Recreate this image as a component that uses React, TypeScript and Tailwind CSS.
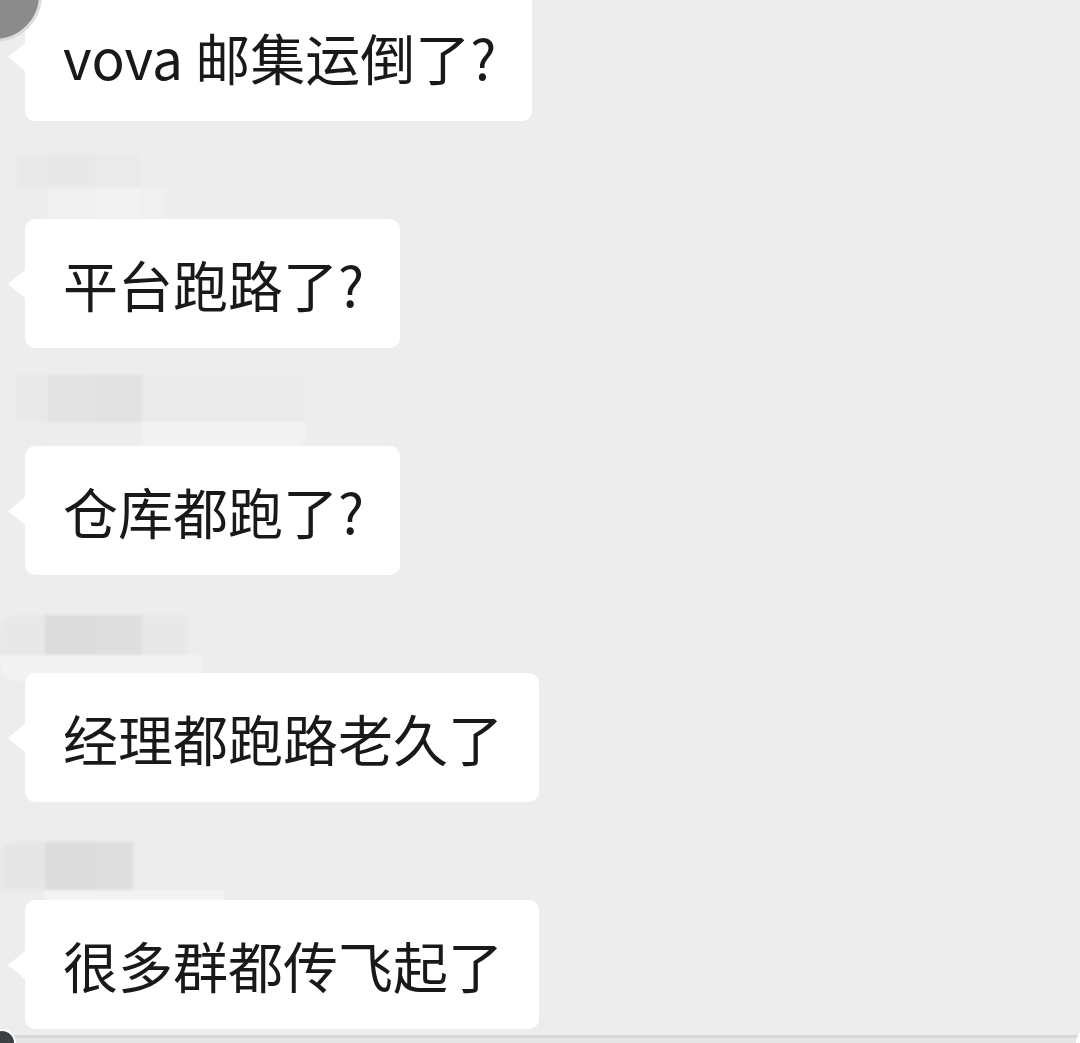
type Block = { w: number; c: string };
type Row = { h: number; x: number; blocks: Block[] };

interface Message {
  text: string;
  // blurred sender name, drawn as mosaic blocks
  name?: Row[];
  nameTop?: number;
}

const MESSAGES: Message[] = [
  { text: 'vova 邮集运倒了?' },
  {
    text: '平台跑路了?',
    nameTop: 34,
    name: [
      { h: 33, x: 17, blocks: [{ w: 31, c: '#e9e9e9' }, { w: 47, c: '#e8e8e8' }, { w: 45, c: '#eaeaea' }] },
      { h: 31, x: 48, blocks: [{ w: 47, c: '#f0f0f0' }, { w: 45, c: '#f2f2f2' }, { w: 27, c: '#f0f0f0' }] },
    ],
  },
  {
    text: '仓库都跑了?',
    nameTop: 27,
    name: [
      { h: 47, x: 16, blocks: [{ w: 32, c: '#e9e9e9' }, { w: 47, c: '#e3e3e3' }, { w: 47, c: '#e1e1e1' }, { w: 160, c: '#ebebeb' }] },
      { h: 24, x: 48, blocks: [{ w: 94, c: '#ededed' }, { w: 164, c: '#f3f3f3' }] },
    ],
  },
  {
    text: '经理都跑路老久了',
    nameTop: 40,
    name: [
      { h: 40, x: 0, blocks: [{ w: 45, c: '#e8e8e8' }, { w: 50, c: '#dcdcdc' }, { w: 47, c: '#dedede' }, { w: 45, c: '#e8e8e8' }] },
      { h: 26, x: 0, blocks: [{ w: 202, c: '#f3f3f3' }] },
    ],
  },
  {
    text: '很多群都传飞起了',
    nameTop: 40,
    name: [
      { h: 48, x: 0, blocks: [{ w: 45, c: '#e6e6e6' }, { w: 50, c: '#dcdcdc' }, { w: 38, c: '#dedede' }] },
      { h: 18, x: 45, blocks: [{ w: 180, c: '#f3f3f3' }] },
    ],
  },
];

function BlurredName({ rows, top }: { rows: Row[]; top: number }) {
  return (
    <div className="h-[98px]" style={{ paddingTop: top }}>
      <div className="flex w-[310px] flex-col overflow-hidden rounded-[16px] blur-[1.5px]">
        {rows.map((r, i) => (
          <div key={i} className="flex" style={{ height: r.h, paddingLeft: r.x }}>
            {r.blocks.map((b, j) => (
              <div key={j} className="h-full shrink-0" style={{ width: b.w, background: b.c }} />
            ))}
          </div>
        ))}
      </div>
    </div>
  );
}

function Bubble({ text }: { text: string }) {
  return (
    <div className="relative ml-[25px] flex h-[129px] w-fit items-center rounded-[10px] bg-white pl-[38px] pr-[36px]">
      <span className="absolute left-[-17px] top-1/2 -mt-[14px] h-0 w-0 border-y-[14px] border-r-[17px] border-y-transparent border-r-white" />
      <span className="whitespace-nowrap text-[55px] leading-none text-[#191919]">{text}</span>
    </div>
  );
}

export default function App() {
  return (
    <div
      className="relative h-[1043px] w-[1080px] overflow-hidden bg-[#ededed]"
      style={{ fontFamily: '"Noto Sans CJK SC", "Noto Sans", sans-serif' }}
    >
      {/* avatar peeking in at the top */}
      <div className="absolute left-[-52px] top-[-52px] z-10 h-[94px] w-[94px] rounded-full border-[3px] border-[#dcdcdc] bg-[#8b8b8b]" />

      <div className="mt-[-8px] flex flex-col">
        {MESSAGES.map((m, i) => (
          <div key={i}>
            {m.name && <BlurredName rows={m.name} top={m.nameTop ?? 30} />}
            <Bubble text={m.text} />
          </div>
        ))}
        <div className="mt-[6px] h-[3px] bg-[#d8d8d8]" />
        <div className="h-[20px] bg-[#e6e6e6]" />
      </div>

      {/* avatars peeking in at the bottom */}
      <div className="absolute left-[-12px] top-[1029px] z-10 h-[28px] w-[28px] rounded-full border-[2px] border-white bg-[#3b3f44]" />
      <div className="absolute left-[1076px] top-[1028px] h-[30px] w-[30px] rounded-full bg-white" />
    </div>
  );
}
